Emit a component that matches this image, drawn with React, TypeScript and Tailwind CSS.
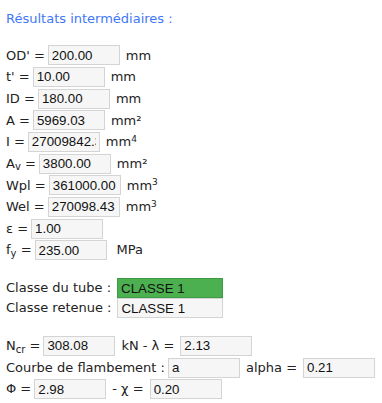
import React from "react";

const label = "font-['DejaVu_Sans',Verdana,sans-serif] text-[13px] text-[#222] whitespace-nowrap";
const box =
  "h-[20px] shrink-0 border px-[3px] font-['Liberation_Sans',Arial,sans-serif] text-[13.3px] text-[#111] outline-none";

const Field = ({ value, wide = false, green = false }: { value: string; wide?: boolean; green?: boolean }) => (
  <input
    readOnly
    value={value}
    className={`${box} ${wide ? "w-[106px]" : "w-[72px]"} ${
      green ? "border-[#3f9a45] bg-[#4caf50]" : "border-[#d4d4d4] bg-[#f6f6f6]"
    }`}
  />
);

const Row = ({ children }: { children: React.ReactNode }) => (
  <div className={`flex h-[21.67px] items-center ${label}`}>{children}</div>
);

export default function App() {
  return (
    <div className="min-h-[403px] w-[382px] bg-white px-[6px] pt-[9px]">
      <div className="font-['DejaVu_Sans',Verdana,sans-serif] text-[13px] text-[#3f78f6]">Résultats intermédiaires :</div>

      <div className="mt-[16px]">
        <Row>
          <span className="mr-[3px]">OD' =</span>
          <Field value="200.00" />
          <span className="ml-[6px]">mm</span>
        </Row>
        <Row>
          <span className="mr-[3px]">t' =</span>
          <Field value="10.00" />
          <span className="ml-[6px]">mm</span>
        </Row>
        <Row>
          <span className="mr-[3px]">ID =</span>
          <Field value="180.00" />
          <span className="ml-[6px]">mm</span>
        </Row>
        <Row>
          <span className="mr-[3px]">A =</span>
          <Field value="5969.03" />
          <span className="ml-[6px]">mm²</span>
        </Row>
        <Row>
          <span className="mr-[3px]">I =</span>
          <Field value="27009842.37" />
          <span className="ml-[6px]">
            mm<sup className="text-[9px]">4</sup>
          </span>
        </Row>
        <Row>
          <span className="mr-[3px]">
            A<sub className="text-[10px]">v</sub> =
          </span>
          <Field value="3800.00" />
          <span className="ml-[6px]">mm²</span>
        </Row>
        <Row>
          <span className="mr-[3px]">Wpl =</span>
          <Field value="361000.00" />
          <span className="ml-[6px]">
            mm<sup className="text-[9px]">3</sup>
          </span>
        </Row>
        <Row>
          <span className="mr-[3px]">Wel =</span>
          <Field value="270098.43" />
          <span className="ml-[6px]">
            mm<sup className="text-[9px]">3</sup>
          </span>
        </Row>
        <Row>
          <span className="mr-[3px]">ε =</span>
          <Field value="1.00" />
        </Row>
        <Row>
          <span className="mr-[3px]">
            f<sub className="text-[10px]">y</sub> =
          </span>
          <Field value="235.00" />
          <span className="ml-[10px]">MPa</span>
        </Row>
      </div>

      <div className="mt-[17px]">
        <div className={`flex h-[20px] items-center ${label}`}>
          <span className="mr-[6px]">Classe du tube :</span>
          <Field value="CLASSE 1" wide green />
        </div>
        <div className={`flex h-[20px] items-center ${label}`}>
          <span className="mr-[6px]">Classe retenue :</span>
          <Field value="CLASSE 1" wide />
        </div>
      </div>

      <div className="mt-[17px]">
        <Row>
          <span className="mr-[3px]">
            N<sub className="text-[10px]">cr</sub> =
          </span>
          <Field value="308.08" />
          <span className="mx-[6px]">kN - λ =</span>
          <Field value="2.13" />
        </Row>
        <Row>
          <span className="mr-[3px]">Courbe de flambement :</span>
          <Field value="a" />
          <span className="mx-[6px]">alpha =</span>
          <Field value="0.21" />
        </Row>
        <Row>
          <span className="mr-[3px]">Φ =</span>
          <Field value="2.98" />
          <span className="mx-[6px]">- χ =</span>
          <Field value="0.20" />
        </Row>
      </div>
    </div>
  );
}
